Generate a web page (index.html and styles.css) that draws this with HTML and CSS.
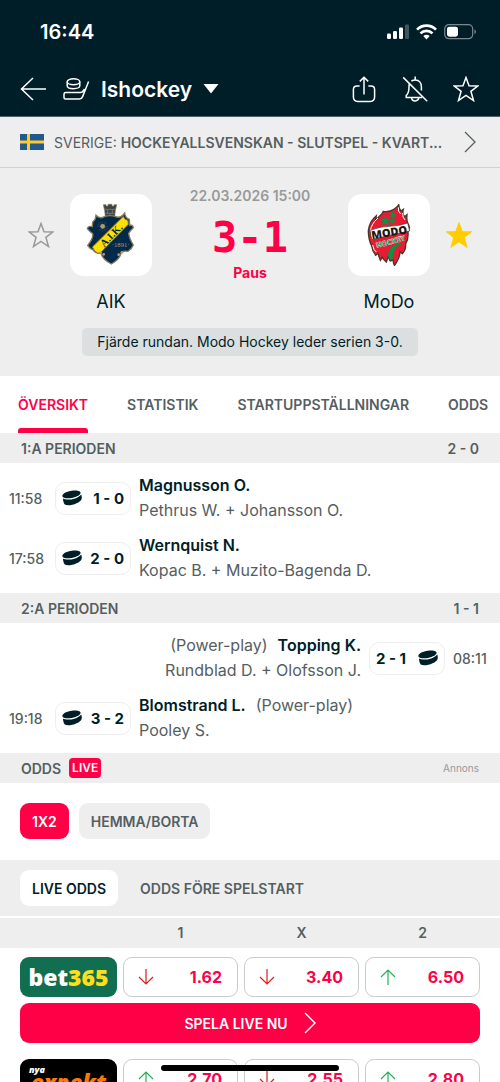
FILE: index.html
```html
<!DOCTYPE html>
<html lang="sv">
<head>
    <meta charset="UTF-8">
    <meta name="viewport" content="width=device-width, initial-scale=1.0">
    <title>AIK - MoDo | Ishockey</title>
    <link rel="stylesheet" href="styles.css">
</head>
<body>
    <!-- shared icons -->
    <svg class="sprite" width="0" height="0" aria-hidden="true">
        <symbol id="star" viewBox="0 0 26 26">
            <path d="M13 1.5 L16 9.7 L25 9.9 L17.9 15.3 L20.5 24.5 L13 19.3 L5.5 24.5 L8.1 15.3 L1 9.9 L10 9.7 Z"/>
        </symbol>
        <symbol id="puck" viewBox="0 0 20 16">
            <path d="M.3 6 C.6 3.4 5 1.2 10 .7 C14 .3 18 .8 18.6 2.6 C19 4.6 15 7.2 9.8 8 C5 8.8 .4 8.2 .3 6 Z"/>
            <path d="M1 8.6 C5 10.8 15 9.4 19.2 4.4 C19.9 5.8 19.9 7.8 19.6 9 C18.6 13 7 17 2.8 14.6 C1.8 13.6 1 10.8 1 8.6 Z"/>
        </symbol>
        <symbol id="down" viewBox="0 0 16 18">
            <path d="M8 1 V16 M1 9 L8 16 L15 9"/>
        </symbol>
        <symbol id="up" viewBox="0 0 16 18">
            <path d="M8 17 V2 M1 9 L8 2 L15 9"/>
        </symbol>
        <symbol id="chevron" viewBox="0 0 12 22">
            <path d="M1 1 L11 11 L1 21"/>
        </symbol>
    </svg>

    <div class="screen">
        <header class="top">
            <div class="status">
                <span class="clock">16:44</span>
                <div class="status-icons">
                    <svg width="22" height="16" viewBox="0 0 22 16" fill="#fff">
                        <rect x="0" y="9.5" width="4" height="5.5" rx="1.2"/>
                        <rect x="6" y="7" width="4" height="8" rx="1.2"/>
                        <rect x="12" y="3.5" width="4" height="11.5" rx="1.2"/>
                        <rect x="18" y="0.5" width="4" height="14.5" rx="1.2" opacity=".25"/>
                    </svg>
                    <svg width="21" height="16" viewBox="0 0 21 16" fill="none" stroke="#fff" stroke-width="2.7">
                        <path d="M1 5.6 A13.5 13.5 0 0 1 20 5.6"/>
                        <path d="M4.5 9.4 A8.5 8.5 0 0 1 16.5 9.4"/>
                        <path d="M7.3 12 Q10.5 9.6 13.7 12 L10.5 15.4 Z" fill="#fff" stroke="none"/>
                    </svg>
                    <svg width="33" height="16" viewBox="0 0 33 16">
                        <rect x=".7" y=".7" width="28" height="14" rx="4.2" fill="none" stroke="#7b898e" stroke-width="1.2"/>
                        <rect x="3" y="2.7" width="11" height="10" rx="2.4" fill="#fff"/>
                        <path d="M30.5 5.2 Q33.5 7.7 30.5 10.2 Z" fill="#7b898e"/>
                    </svg>
                </div>
            </div>
            <nav class="nav">
                <button class="icon-btn" aria-label="Tillbaka">
                    <svg width="26" height="24" viewBox="0 0 26 24"><path d="M13 1 L1.5 12 L13 23 M1.5 12 H26"/></svg>
                </button>
                <button class="sport">
                    <svg width="27" height="24" viewBox="0 0 27 24">
                        <ellipse cx="10.5" cy="4.7" rx="6.3" ry="3"/>
                        <path d="M4.2 4.7 V8.7 C4.2 12.6 16.8 12.6 16.8 8.7 V4.7"/>
                        <path d="M25.6 4.5 L19.6 19.6 Q18.6 22 16.4 22 H2.5 Q1 22 1 20.5 V17.2 Q1 15.6 2.8 15.6 H17.5 Q19.6 15.6 20.6 13.4 L21.3 12"/>
                    </svg>
                    <span>Ishockey</span>
                    <svg class="caret" width="16" height="10" viewBox="0 0 16 10"><path d="M.5 0 H15.5 L8 9.5 Z"/></svg>
                </button>
                <div class="actions">
                    <button class="icon-btn" aria-label="Dela">
                        <svg width="26" height="28" viewBox="0 0 26 28"><path d="M13 19.5 V2.5 M8.8 6.4 L13 2.2 L17.2 6.4 M8.6 11 H6 Q2.4 11 2.4 14.5 V22 Q2.4 26.4 6.8 26.4 H19.2 Q23.6 26.4 23.6 22 V14.5 Q23.6 11 20 11 H17.4"/></svg>
                    </button>
                    <button class="icon-btn" aria-label="Aviseringar av">
                        <svg width="26" height="28" viewBox="0 0 26 28"><path d="M1.2 2.4 L25.2 26.2 M13.2 1.4 V5 M9.4 6.2 Q11 5 13.2 5 C17.2 5 19.4 8 19.4 12 V15.6 M7.3 9 C7 10 7 11 7 12 C7 16.5 6.3 18.6 4.2 20.6 V22.6 H20 M9.6 22.8 C9.8 27 16.4 27 16.8 22.8"/></svg>
                    </button>
                    <button class="icon-btn" aria-label="Favorit">
                        <svg width="26" height="28"><use href="#star" width="26" height="26" y="1"/></svg>
                    </button>
                </div>
            </nav>
        </header>

        <a class="league" href="#">
            <svg class="flag" width="24" height="16" viewBox="0 0 24 16">
                <rect width="24" height="16" fill="#21598f"/>
                <path d="M8.5 0 V16 M0 8 H24" stroke="#fdcb2e" stroke-width="3"/>
            </svg>
            <span class="league-name">SVERIGE: <b>HOCKEYALLSVENSKAN - SLUTSPEL - KVART...</b></span>
            <svg class="chevron" width="12" height="22"><use href="#chevron"/></svg>
        </a>

        <section class="match">
            <div class="match-row">
                <button class="icon-btn fav" aria-label="Följ AIK"><svg width="26" height="26"><use href="#star"/></svg></button>
                <div class="team">
                    <div class="team-logo">
                        <svg viewBox="6 12 246 246" role="img" aria-label="AIK">
                            <path d="M106 44 H114 V48 H120 V43 H132 V48 H138 V44 H146 L142 62 L140 80 H112 L110 62 Z" fill="#3a4548" stroke="#8a7a5a" stroke-width="2"/>
                            <path d="M111 58 H141 M113 70 H139 M119 60 V70 M126 70 V79 M133 60 V70" stroke="#9a8963" stroke-width="2"/>
                            <path d="M84 76 Q96 88 109 80 Q126 74 143 80 Q158 86 170 69 Q172 84 184 88 L185 106 Q194 103 196 113 Q187 121 182 130 Q184 146 196 165 Q191 178 180 184 Q169 182 160 186 Q157 207 130 222 Q104 209 98 188 Q86 194 75 180 Q64 175 59 166 Q77 145 74 131 Q66 126 58 116 Q60 107 73 110 L74 96 Q84 88 84 76 Z" fill="#00294a" stroke="#8b795b" stroke-width="4"/>
                            <path d="M166 79 Q170 90 180 91 L181 103 L96 190 Q82 191 73 171 Z" fill="#ffe000" stroke="#806d35" stroke-width="3"/>
                            <g stroke="#5d655f" stroke-width="1">
                                <path d="M104 92 V126 M87 109 H121 M91 97 L117 122 M117 97 L91 122 M96 94 L112 125 M89 103 L119 116 M112 94 L96 125"/>
                            </g>
                            <circle cx="104" cy="109" r="7" fill="#b49c72"/>
                            <text class="crest-aik" x="130" y="146" transform="rotate(-46 130 136)" text-anchor="middle">A.I.K.</text>
                            <text class="crest-year" x="158" y="172" text-anchor="middle">·1891·</text>
                            <g fill="#b49c72"><circle cx="98" cy="188" r="4"/><circle cx="107" cy="193" r="4"/><circle cx="152" cy="194" r="4"/><circle cx="162" cy="187" r="4"/></g>
                        </svg>
                    </div>
                    <span class="team-name">AIK</span>
                </div>
                <div class="result">
                    <time class="date">22.03.2026 15:00</time>
                    <strong class="score">3-1</strong>
                    <span class="stage">Paus</span>
                </div>
                <div class="team">
                    <div class="team-logo">
                        <svg viewBox="6 12 246 246" role="img" aria-label="MoDo Hockey">
                            <path d="M159 43 Q157 55 165 63 L172 58 Q168 73 176 80 L183 74 Q181 91 186 101 Q194 112 186 126 Q188 146 179 162 Q180 180 169 191 L162 185 Q161 204 153 214 Q148 224 145 226 Q140 215 142 207 Q133 217 131 210 L127 199 L121 216 Q112 208 109 202 L103 211 Q98 198 96 190 L89 196 Q79 184 77 168 Q67 148 67 122 Q70 94 91 77 L89 90 L108 71 L112 64 Q131 67 145 57 Q155 51 159 43 Z" fill="#e71b33" stroke="#473727" stroke-width="4"/>
                            <path d="M157 52 Q155 64 164 72 M170 69 Q169 83 177 90 M96 84 Q75 103 73 123 M80 165 Q83 182 91 186" fill="none" stroke="#fff" stroke-width="3"/>
                            <path d="M72 121 Q105 109 128 109 Q157 109 185 99 L191 123 Q145 132 77 149 Z" fill="#fff" stroke="#3b2a20" stroke-width="2"/>
                            <g fill="#079447">
                                <path d="M118 74 L122 87 L135 86 L125 95 L130 107 L118 100 L106 106 L111 94 L101 86 L114 86 Z"/>
                                <path d="M140 63 L143 71 L151 72 L145 77 L147 85 L140 80 L133 83 L135 76 L129 70 L137 70 Z"/>
                                <path d="M140 84 L143 90 L150 91 L144 96 L145 103 L139 98 L133 101 L135 95 L131 90 L137 90 Z"/>
                                <path d="M177 160 Q155 163 146 180 Q137 195 141 209 Q127 210 126 196 Q127 176 145 165 Q158 158 177 160 Z"/>
                            </g>
                            <text class="crest-modo" x="130" y="139" transform="rotate(-9 130 130)" text-anchor="middle">MODO</text>
                            <text class="crest-hockey" x="133" y="163" transform="rotate(-15 133 152)" text-anchor="middle">HOCKEY</text>
                        </svg>
                    </div>
                    <span class="team-name">MoDo</span>
                </div>
                <button class="icon-btn fav fav-on" aria-label="Följer MoDo"><svg width="26" height="26"><use href="#star"/></svg></button>
            </div>
            <p class="note">Fjärde rundan. Modo Hockey leder serien 3-0.</p>
        </section>

        <nav class="tabs">
            <a class="tab active" href="#">ÖVERSIKT</a>
            <a class="tab" href="#">STATISTIK</a>
            <a class="tab" href="#">STARTUPPSTÄLLNINGAR</a>
            <a class="tab" href="#">ODDS</a>
        </nav>

        <main>
            <h2 class="bar"><span>1:A PERIODEN</span><span>2 - 0</span></h2>
            <div class="events">
                <div class="event">
                    <time>11:58</time>
                    <div class="goal"><svg width="20" height="16"><use href="#puck"/></svg><span>1 - 0</span></div>
                    <div class="players"><p><b>Magnusson O.</b></p><p>Pethrus W. + Johansson O.</p></div>
                </div>
                <div class="event">
                    <time>17:58</time>
                    <div class="goal"><svg width="20" height="16"><use href="#puck"/></svg><span>2 - 0</span></div>
                    <div class="players"><p><b>Wernquist N.</b></p><p>Kopac B. + Muzito-Bagenda D.</p></div>
                </div>
            </div>

            <h2 class="bar"><span>2:A PERIODEN</span><span>1 - 1</span></h2>
            <div class="events">
                <div class="event away">
                    <time>08:11</time>
                    <div class="goal"><svg width="20" height="16"><use href="#puck"/></svg><span>2 - 1</span></div>
                    <div class="players"><p><span>(Power-play)</span><b>Topping K.</b></p><p>Rundblad D. + Olofsson J.</p></div>
                </div>
                <div class="event">
                    <time>19:18</time>
                    <div class="goal"><svg width="20" height="16"><use href="#puck"/></svg><span>3 - 2</span></div>
                    <div class="players"><p><b>Blomstrand L.</b><span>(Power-play)</span></p><p>Pooley S.</p></div>
                </div>
            </div>

            <h2 class="bar"><span>ODDS</span><span class="live">LIVE</span><small>Annons</small></h2>
            <div class="pills market">
                <button class="pill selected">1X2</button>
                <button class="pill">HEMMA/BORTA</button>
            </div>
            <div class="pills period">
                <button class="pill selected">LIVE ODDS</button>
                <button class="pill">ODDS FÖRE SPELSTART</button>
            </div>

            <table class="odds">
                <thead>
                    <tr><th></th><th>1</th><th>X</th><th>2</th></tr>
                </thead>
                <tbody>
                    <tr>
                        <td><a class="bookie bet365" href="#"><span>bet<em>365</em></span></a></td>
                        <td><button class="odd down"><svg width="16" height="18"><use href="#down"/></svg>1.62</button></td>
                        <td><button class="odd down"><svg width="16" height="18"><use href="#down"/></svg>3.40</button></td>
                        <td><button class="odd up"><svg width="16" height="18"><use href="#up"/></svg>6.50</button></td>
                    </tr>
                    <tr>
                        <td class="wide"><a class="play" href="#">SPELA LIVE NU <svg width="12" height="22"><use href="#chevron"/></svg></a></td>
                    </tr>
                </tbody>
                <tbody>
                    <tr>
                        <td><a class="bookie expekt" href="#"><small>nya</small><span>expekt</span></a></td>
                        <td><button class="odd up"><svg width="16" height="18"><use href="#up"/></svg>2.70</button></td>
                        <td><button class="odd down"><svg width="16" height="18"><use href="#down"/></svg>2.55</button></td>
                        <td><button class="odd up"><svg width="16" height="18"><use href="#up"/></svg>2.80</button></td>
                    </tr>
                </tbody>
            </table>
        </main>
        <div class="home-bar"></div>
    </div>
</body>
</html>
```
FILE: styles.css
```css
*{
    box-sizing: border-box;
}
body{
    margin: 0;
    background-color: #fff;
    color: #001e28;
    font-family: Inter, "Liberation Sans", sans-serif;
    font-size: 16px;
}
p, h2{
    margin: 0;
}
a{
    color: inherit;
    text-decoration: none;
}
button{
    margin: 0;
    padding: 0;
    border: 0;
    background: none;
    color: inherit;
    font: inherit;
}
svg{
    display: block;
    flex: none;
}
.sprite{
    position: absolute;
}
.screen{
    height: 100vh;
    overflow: hidden;
}

/* header */
.top{
    background-color: #001e28;
    border-bottom: 1px solid #4d6269;
    color: #fff;
}
.status{
    display: flex;
    align-items: center;
    justify-content: space-between;
    height: 64px;
    padding: 0 23px 0 40px;
}
.clock{
    font-size: 20px;
    font-weight: 600;
}
.status-icons{
    display: flex;
    gap: 7px;
}
.nav{
    display: flex;
    align-items: center;
    gap: 17px;
    height: 52px;
    padding: 0 21px 2px 20px;
}
.nav svg{
    fill: none;
    stroke: #fff;
    stroke-width: 1.5;
}
.nav .caret{
    fill: #fff;
    stroke: none;
}
.sport{
    display: flex;
    align-items: center;
    gap: 11px;
    font-size: 21px;
    font-weight: 600;
}
.actions{
    display: flex;
    gap: 25px;
    margin-left: auto;
}

/* league */
.league{
    display: flex;
    align-items: center;
    gap: 10px;
    height: 51px;
    padding: 0 24px 0 20px;
    background-color: #eee;
    border-bottom: 1px solid #cfd3d3;
    color: #555e61;
    font-size: 14px;
}
.league-name{
    flex: 1;
    min-width: 0;
    white-space: nowrap;
}
.league b{
    font-weight: 600;
}
.chevron{
    fill: none;
    stroke: #555e61;
    stroke-width: 1.3;
}

/* match */
.match{
    display: flex;
    flex-direction: column;
    align-items: center;
    gap: 14px;
    padding: 19px 28px 20px;
    background-color: #eee;
}
.match-row{
    display: flex;
    align-items: flex-start;
    width: 100%;
    gap: 16px;
}
.fav{
    margin-top: 35px;
    fill: none;
    stroke: #999;
    stroke-width: 1.5;
}
.fav-on{
    fill: #ffcd00;
    stroke: #ffcd00;
}
.team{
    display: flex;
    flex-direction: column;
    align-items: center;
    gap: 14px;
    width: 82px;
    padding-top: 7px;
}
.team-logo{
    width: 82px;
    height: 82px;
    border-radius: 14px;
    background-color: #fff;
}
.team-name{
    font-size: 18px;
    line-height: 24px;
}
.crest-aik{
    fill: #00294a;
    font: bold 31px "Liberation Serif", serif;
}
.crest-year{
    fill: #a99b78;
    font: 20px "Liberation Serif", serif;
}
.crest-modo{
    fill: #1f1710;
    font: 800 33px "Open Sans", sans-serif;
}
.crest-hockey{
    fill: #079447;
    stroke: #fff;
    stroke-width: 1;
    font: 800 22px "Open Sans", sans-serif;
}
.result{
    display: flex;
    flex: 1;
    flex-direction: column;
    align-items: center;
    white-space: nowrap;
}
.date{
    color: #999;
    font-size: 14px;
    font-weight: 600;
    line-height: 18px;
}
.score{
    color: #ff0046;
    font-family: "DejaVu Sans Mono", monospace;
    font-size: 42px;
    line-height: 50px;
    padding-top: 8px;
}
.stage{
    color: #ff0046;
    font-size: 14px;
    font-weight: 700;
    line-height: 20px;
}
.note{
    padding: 0 15px;
    border-radius: 5px;
    background-color: #dbdfe0;
    font-size: 14px;
    line-height: 28px;
}

/* tabs */
.tabs{
    display: flex;
    gap: 39px;
    height: 57px;
    padding-left: 18px;
    overflow: hidden;
}
.tab{
    flex: none;
    color: #555e61;
    font-size: 14px;
    font-weight: 600;
    line-height: 57px;
}
.tab.active{
    color: #ff0046;
}
.tab.active::after{
    content: "";
    display: block;
    height: 5px;
    margin-top: -5px;
    border-radius: 3px 3px 0 0;
    background-color: #ff0046;
}

/* events */
.bar{
    display: flex;
    align-items: center;
    justify-content: space-between;
    height: 30px;
    padding: 0 21px;
    background-color: #eee;
    color: #555e61;
    font-size: 14px;
    font-weight: 600;
}
.live{
    margin-left: 8px;
    padding: 0 3px;
    border-radius: 4px;
    background-color: #ff0046;
    color: #fff;
    font-size: 12px;
    line-height: 20px;
}
.bar small{
    margin-left: auto;
    color: #999;
    font-size: 10px;
    font-weight: 400;
}
.events{
    padding: 5px 0;
}
.event{
    display: flex;
    align-items: center;
    gap: 8px;
    height: 60px;
    padding: 0 9px;
}
.event time{
    width: 38px;
    color: #555e61;
    font-size: 14px;
    font-weight: 500;
}
.goal{
    display: flex;
    align-items: center;
    justify-content: space-between;
    width: 76px;
    height: 33px;
    padding: 0 6px;
    border: 1px solid #eee;
    border-radius: 10px;
    font-size: 15px;
    font-weight: 700;
    white-space: nowrap;
}
.goal svg{
    fill: #001e28;
}
.players{
    color: #555e61;
    line-height: 25px;
}
.players p{
    display: flex;
    gap: 10px;
}
.players b{
    color: #001e28;
    font-weight: 600;
}
.away{
    flex-direction: row-reverse;
}
.away .goal{
    flex-direction: row-reverse;
}
.away p{
    justify-content: flex-end;
}

/* odds */
.pills{
    display: flex;
    gap: 10px;
    padding: 20px 20px 21px;
}
.pill{
    height: 36px;
    padding: 0 12px;
    border-radius: 9px;
    background-color: #eee;
    color: #555e61;
    font-size: 14px;
    font-weight: 600;
}
.market .selected{
    background-color: #ff0046;
    color: #fff;
}
.period{
    padding: 10px 20px;
    background-color: #eee;
}
.period .selected{
    background-color: #fff;
    color: #001e28;
}
.odds{
    display: block;
    margin-top: 2px;
}
.odds thead, .odds tbody{
    display: block;
}
.odds tr{
    display: grid;
    grid-template-columns: 97px 1fr 1fr 1fr;
    gap: 6px;
    padding: 0 20px;
}
.odds td, .odds th{
    display: block;
    padding: 0;
}
.odds th{
    color: #555e61;
    font-size: 14px;
    font-weight: 600;
    line-height: 30px;
}
.odds thead{
    background-color: #eee;
}
.odds tbody{
    display: grid;
    gap: 6px;
    padding: 9px 0 7px;
}
.odds .wide{
    grid-column: 1 / -1;
}
.odd{
    display: flex;
    align-items: center;
    justify-content: space-between;
    width: 100%;
    height: 40px;
    padding: 0 15px 0 14px;
    border: 1px solid #c8cdcd;
    border-radius: 9px;
    color: #ff0046;
    font-weight: 700;
}
.odd svg{
    fill: none;
    stroke: #dc1c1c;
    stroke-width: 1.2;
}
.odd.up svg{
    stroke: #1fb457;
}
.play{
    display: flex;
    align-items: center;
    justify-content: center;
    gap: 16px;
    height: 40px;
    border-radius: 9px;
    background-color: #ff0046;
    color: #fff;
    font-size: 14px;
    font-weight: 600;
}
.play svg{
    fill: none;
    stroke: #fff;
    stroke-width: 1.4;
}
.bookie{
    display: flex;
    height: 40px;
    border-radius: 9px;
    font-family: "Open Sans", sans-serif;
    font-weight: 800;
}
.bet365{
    align-items: center;
    justify-content: center;
    background-color: #126e51;
    color: #fff;
    font-size: 23px;
}
.bet365 em{
    color: #ffdf1b;
    font-style: normal;
}
.expekt{
    flex-direction: column;
    padding: 6px 9px;
    background-color: #000;
    color: #fff;
    font-style: italic;
}
.expekt small{
    font-size: 9px;
    line-height: 10px;
}
.expekt span{
    color: #ff7800;
    font-size: 22px;
    line-height: 14px;
    text-align: center;
}
.home-bar{
    position: fixed;
    bottom: 11px;
    left: 50%;
    width: 178px;
    height: 6px;
    margin-left: -89px;
    border-radius: 3px;
    background-color: #000;
}
```
